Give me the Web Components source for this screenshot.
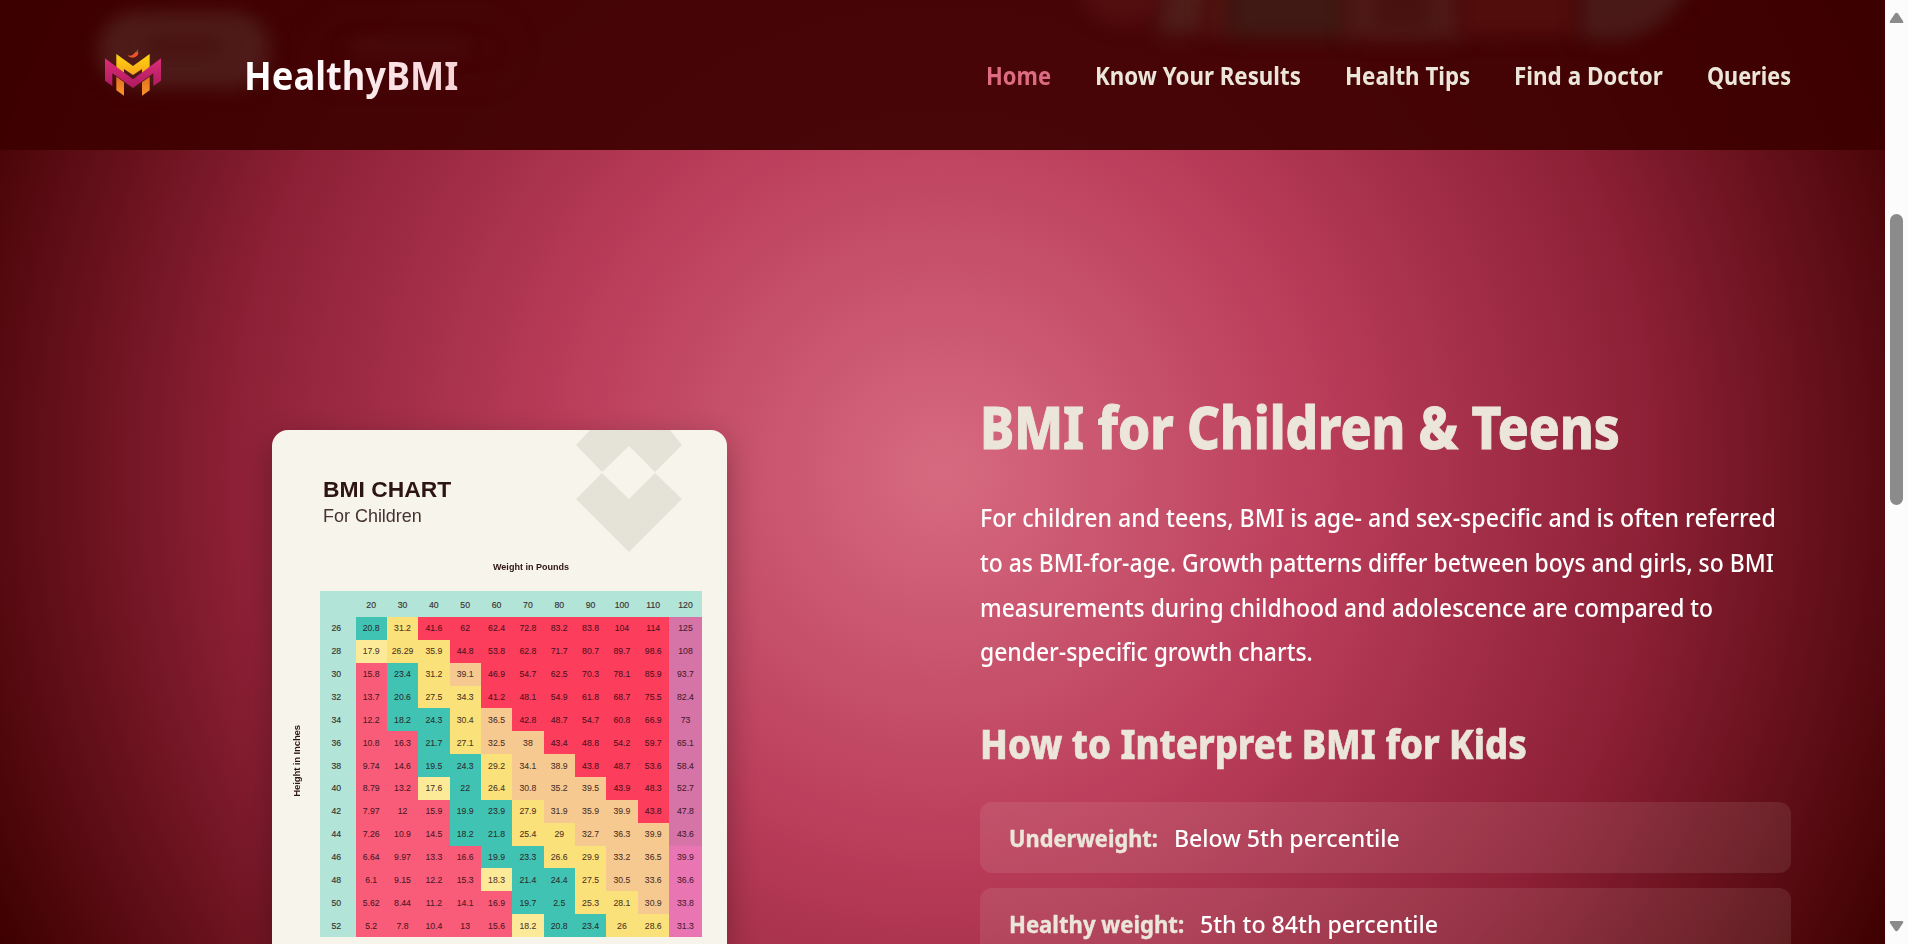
<!DOCTYPE html>
<html lang="en">
<head>
<meta charset="utf-8">
<title>HealthyBMI</title>
<style>
html,body{margin:0;height:100%;overflow:hidden}
body{display:flex;font-family:"Noto Sans","Open Sans",sans-serif;background:#3d0000}
</style>
</head>
<body>
<bmi-page></bmi-page>
<page-scrollbar></page-scrollbar>
<script>
function define(name, html, setup){
  const tpl=document.createElement('template');
  tpl.innerHTML=html;
  customElements.define(name,class extends HTMLElement{
    connectedCallback(){
      if(this.shadowRoot)return;
      this.attachShadow({mode:'open'}).append(tpl.content.cloneNode(true));
      if(setup)setup(this,this.shadowRoot);
    }
  });
}

/* One line of text condensed to a given advance width. */
define('fit-text',`<style>
:host{display:block;white-space:nowrap}
span{display:inline-block;transform-origin:0 50%}
</style><span><slot></slot></span>`,(el,root)=>{
  const w=+el.getAttribute('w'),s=root.querySelector('span');
  el.style.width=w+'px';
  const natural=s.offsetWidth;
  if(natural)s.style.transform='scaleX('+(w/natural)+')';
});

define('brand-logo',`<style>:host{display:block;width:57px;height:48px}svg{display:block}</style>
<svg width="57" height="48" viewBox="135 145 171 144">
<defs>
<linearGradient id="y" x1="0" y1="0" x2="0" y2="1"><stop offset="0" stop-color="#fdd70f"/><stop offset="1" stop-color="#f9a51c"/></linearGradient>
<linearGradient id="o" x1="0" y1="0" x2="0" y2="1"><stop offset="0" stop-color="#e0701f"/><stop offset="1" stop-color="#fb9429"/></linearGradient>
<linearGradient id="m" x1="0" y1="0" x2="0" y2="1"><stop offset="0" stop-color="#de2c78"/><stop offset="1" stop-color="#ad1a60"/></linearGradient>
</defs>
<path fill="url(#y)" d="M169 160l50 36 50-36v42l-23 16v-13l-27 18-27-18v13l-23-16z"/>
<path fill="url(#o)" d="M169 228l23 17v40l-23-16zM269 228l-23 17v40l23-16z"/>
<path fill="url(#m)" d="M135 173l84 63 84-63v67l-23 16v-38l-61 44-62-44v38l-22-16z"/>
<path fill="#f0532b" d="M202 164q15 4 21-6 5-8 12-4 1 10-9 15-14 6-24-5z"/>
<path fill="none" stroke="#5c7d2c" stroke-width="3" d="M230 155l4-8"/>
</svg>`);

define('site-header',`<style>
:host{display:flex;flex:none;align-items:center;box-sizing:border-box;height:150px;padding:0 94px 0 105px;position:relative;overflow:hidden;background:rgba(61,0,0,.91)}
i{position:absolute;filter:blur(9px)}
.a{left:98px;top:12px;width:172px;height:76px;border-radius:38px;background:#4e1b19}
.b{left:150px;top:38px;width:70px;height:16px;background:#47100f}
.b2{left:308px;top:12px;width:212px;height:74px;border-radius:38px;border:2px solid #4b0b0c;box-sizing:border-box}
.b3{left:352px;top:40px;width:110px;height:14px;background:#490c0d}
.c{left:1080px;top:-50px;width:88px;height:76px;border-radius:50%;background:#520d0e}
.d{left:1163px;top:-30px;width:44px;height:64px;background:#4f1d18;transform:skewX(-10deg)}
.d2{left:1206px;top:-30px;width:24px;height:66px;background:#501510}
.e{left:1228px;top:-30px;width:120px;height:68px;background:#401914}
.f{left:1346px;top:-30px;width:116px;height:70px;background:#4e1a17}
.f2{left:1374px;top:-20px;width:56px;height:48px;background:#47110f}
.g{left:1460px;top:-30px;width:116px;height:66px;background:#510d0b}
.h{left:1580px;top:-42px;width:112px;height:82px;border-radius:0 0 90px 0;background:#491918}
brand-logo{position:relative;margin-top:-4px}
.name{position:relative;margin-left:82px;font-size:40px;font-weight:700;line-height:56px}
.name span{background:linear-gradient(90deg,#fff 20%,#f8d2d7);-webkit-background-clip:text;background-clip:text;color:transparent}
nav{position:relative;display:flex;gap:44px;margin-left:auto}
nav fit-text{color:#ebe6d9;font-size:25px;font-weight:700;line-height:34px}
nav fit-text[active]{color:#dd6b82}
</style>
<i class="a"></i><i class="b"></i><i class="b2"></i><i class="b3"></i><i class="c"></i><i class="d"></i><i class="d2"></i><i class="e"></i><i class="f"></i><i class="f2"></i><i class="g"></i><i class="h"></i>
<brand-logo></brand-logo>
<fit-text class="name" w="214"><span>HealthyBMI</span></fit-text>
<nav>
<fit-text active w="65">Home</fit-text><fit-text w="206">Know Your Results</fit-text><fit-text w="125">Health Tips</fit-text><fit-text w="149">Find a Doctor</fit-text><fit-text w="84">Queries</fit-text>
</nav>`);

const KEY={T:'#40c3b3',Y:'#fbe179',L:'#fdea98',P:'#f6c991',R:'#fd3d5c',K:'#f95c78',V:'#d674a8',W:'#e976b3'};
const ROWS=[
['26','TYRRRRRRRRV','20.8 31.2 41.6 62 62.4 72.8 83.2 83.8 104 114 125'],
['28','LYYRRRRRRRV','17.9 26.29 35.9 44.8 53.8 62.8 71.7 80.7 89.7 98.6 108'],
['30','KTYPRRRRRRV','15.8 23.4 31.2 39.1 46.9 54.7 62.5 70.3 78.1 85.9 93.7'],
['32','KTYYRRRRRRV','13.7 20.6 27.5 34.3 41.2 48.1 54.9 61.8 68.7 75.5 82.4'],
['34','KTTYPRRRRRV','12.2 18.2 24.3 30.4 36.5 42.8 48.7 54.7 60.8 66.9 73'],
['36','KKTYPPRRRRV','10.8 16.3 21.7 27.1 32.5 38 43.4 48.8 54.2 59.7 65.1'],
['38','KKTTYPPRRRV','9.74 14.6 19.5 24.3 29.2 34.1 38.9 43.8 48.7 53.6 58.4'],
['40','KKLTYPPPRRV','8.79 13.2 17.6 22 26.4 30.8 35.2 39.5 43.9 48.3 52.7'],
['42','KKKTTYPPPRV','7.97 12 15.9 19.9 23.9 27.9 31.9 35.9 39.9 43.8 47.8'],
['44','KKKTTYYPPPV','7.26 10.9 14.5 18.2 21.8 25.4 29 32.7 36.3 39.9 43.6'],
['46','KKKKTTYYPPW','6.64 9.97 13.3 16.6 19.9 23.3 26.6 29.9 33.2 36.5 39.9'],
['48','KKKKLTTYPPW','6.1 9.15 12.2 15.3 18.3 21.4 24.4 27.5 30.5 33.6 36.6'],
['50','KKKKKTTYYPW','5.62 8.44 11.2 14.1 16.9 19.7 2.5 25.3 28.1 30.9 33.8'],
['52','KKKKKLTTYYW','5.2 7.8 10.4 13 15.6 18.2 20.8 23.4 26 28.6 31.3']];

define('bmi-grid',`<style>
:host{display:grid;width:382px;grid-template-columns:35.5px repeat(10,31.35px) 1fr;grid-template-rows:26px repeat(14,22.86px);background:#b2e5d8;font:8.7px "Liberation Sans",Arial,sans-serif;color:#3b3230}
b{font-weight:400;display:flex;align-items:center;justify-content:center;-webkit-text-stroke:.15px}
.h{padding-top:2px}
.n{padding-right:3px}
.c{color:rgba(40,10,15,.78)}
</style>`,(el,root)=>{
  const add=(t,cls,bg)=>{const b=document.createElement('b');b.textContent=t;b.className=cls;if(bg)b.style.background=bg;root.append(b)};
  add('','h');
  for(let i=20;i<=120;i+=10)add(i,'h');
  for(const [n,k,v] of ROWS){add(n,'n');v.split(' ').forEach((t,i)=>add(t,'c',KEY[k[i]]))}
});

define('bmi-chart',`<style>
:host{display:block;box-sizing:border-box;position:relative;width:455px;height:514px;border-radius:16px 16px 0 0;overflow:hidden;background:#f7f4ec;color:#2d1512;font-family:"Liberation Sans",Arial,sans-serif}
svg{position:absolute;left:303px;top:0}
.t{display:grid;grid-template-rows:27px 25px;padding:46px 0 0 51px;line-height:27px}
.t fit-text:first-child{font-size:22.5px;font-weight:700}
.t fit-text:last-child{font-size:18.5px;line-height:25px;color:#45312f}
.w{font-size:9.5px;font-weight:700;line-height:12px;margin:33px 0 18px 221px}
.r{display:flex;align-items:flex-start}
.s{width:48px;height:340px;display:flex;align-items:center;justify-content:center}
.s span{writing-mode:vertical-rl;transform:rotate(180deg);font-size:9.6px;font-weight:700;white-space:nowrap;letter-spacing:-.15px}
</style>
<svg width="110" height="124" viewBox="0 0 110 124"><path fill="#e5e3d8" d="M15 0H95L107 15 80 42 54 16 27 42 1 15ZM27 43L54 69 80 43 107 69 54 122 1 69Z"/></svg>
<div class="t"><fit-text w="128">BMI CHART</fit-text><fit-text w="99">For Children</fit-text></div>
<div class="w"><fit-text w="76">Weight in Pounds</fit-text></div>
<div class="r"><div class="s"><span>Height in Inches</span></div><bmi-grid></bmi-grid></div>`);

define('range-item',`<style>
:host{display:flex;align-items:center;gap:16px;box-sizing:border-box;height:71px;padding:0 29px;border-radius:12px;background:rgba(235,230,217,.1);font-size:24px;line-height:36px}
::slotted([slot=label]){font-weight:700;color:#ebe6d9;-webkit-text-stroke:.4px}
::slotted([slot=value]){font-weight:500}
</style><slot name="label"></slot><slot name="value"></slot>`);

define('bmi-page',`<style>
:host{display:flex;flex-direction:column;width:1885px;flex:none;height:944px;overflow:hidden;background:radial-gradient(circle farthest-corner at 50% 50%,#d76a80 0%,#ba3d5a 36%,#8d2036 67%,#3d0000 100%)}
main{display:grid;flex:none;grid-template-columns:455px 811px;column-gap:253px;padding-left:272px;align-items:start}
.shade{margin-top:280px;border-radius:16px 16px 0 0;box-shadow:0 10px 30px rgba(0,0,0,.3)}
article{padding-top:242px;color:#fff}
h1,h2,p{margin:0}
h1{font-size:58px;line-height:70px;font-weight:800;color:#ebe6d9;-webkit-text-stroke:1px}
h2{font-size:41px;line-height:50px;font-weight:800;color:#ebe6d9;margin:43px 0 34px;-webkit-text-stroke:.6px}
p{font-size:24.5px;line-height:44.8px;font-weight:500;margin-top:34px}
ul{list-style:none;margin:0;padding:0;display:grid;gap:15px}
</style>
<site-header></site-header>
<main>
<div class="shade"><bmi-chart></bmi-chart></div>
<article>
<h1><fit-text w="640">BMI for Children &amp; Teens</fit-text></h1>
<p><fit-text w="796">For children and teens, BMI is age- and sex-specific and is often referred</fit-text><fit-text w="794">to as BMI-for-age. Growth patterns differ between boys and girls, so BMI</fit-text><fit-text w="733">measurements during childhood and adolescence are compared to</fit-text><fit-text w="333">gender-specific growth charts.</fit-text></p>
<h2><fit-text w="547">How to Interpret BMI for Kids</fit-text></h2>
<ul>
<li><range-item><fit-text slot="label" w="149">Underweight:</fit-text><fit-text slot="value" w="226">Below 5th percentile</fit-text></range-item></li>
<li><range-item><fit-text slot="label" w="175">Healthy weight:</fit-text><fit-text slot="value" w="238">5th to 84th percentile</fit-text></range-item></li>
</ul>
</article>
</main>`);

define('page-scrollbar',`<style>
:host{display:flex;flex-direction:column;align-items:center;box-sizing:border-box;width:23px;height:944px;padding:12px 0;background:#fcfcfc}
div{width:13px;height:291px;border-radius:7px;background:#8b8b8b;margin-top:190px}
svg{display:block}
svg:last-child{margin-top:auto}
</style>
<svg width="15" height="12"><path fill="#8b8b8b" d="M6 1.5Q7.500 0 9 1.500L14 9q1 2-1 2H2Q0 11 1 9Z"/></svg>
<div></div>
<svg width="15" height="12"><path fill="#8b8b8b" d="M6 10.500Q7.500 12 9 10.500L14 3q1-2-1-2H2Q0 1 1 3Z"/></svg>`);
</script>
</body>
</html>
